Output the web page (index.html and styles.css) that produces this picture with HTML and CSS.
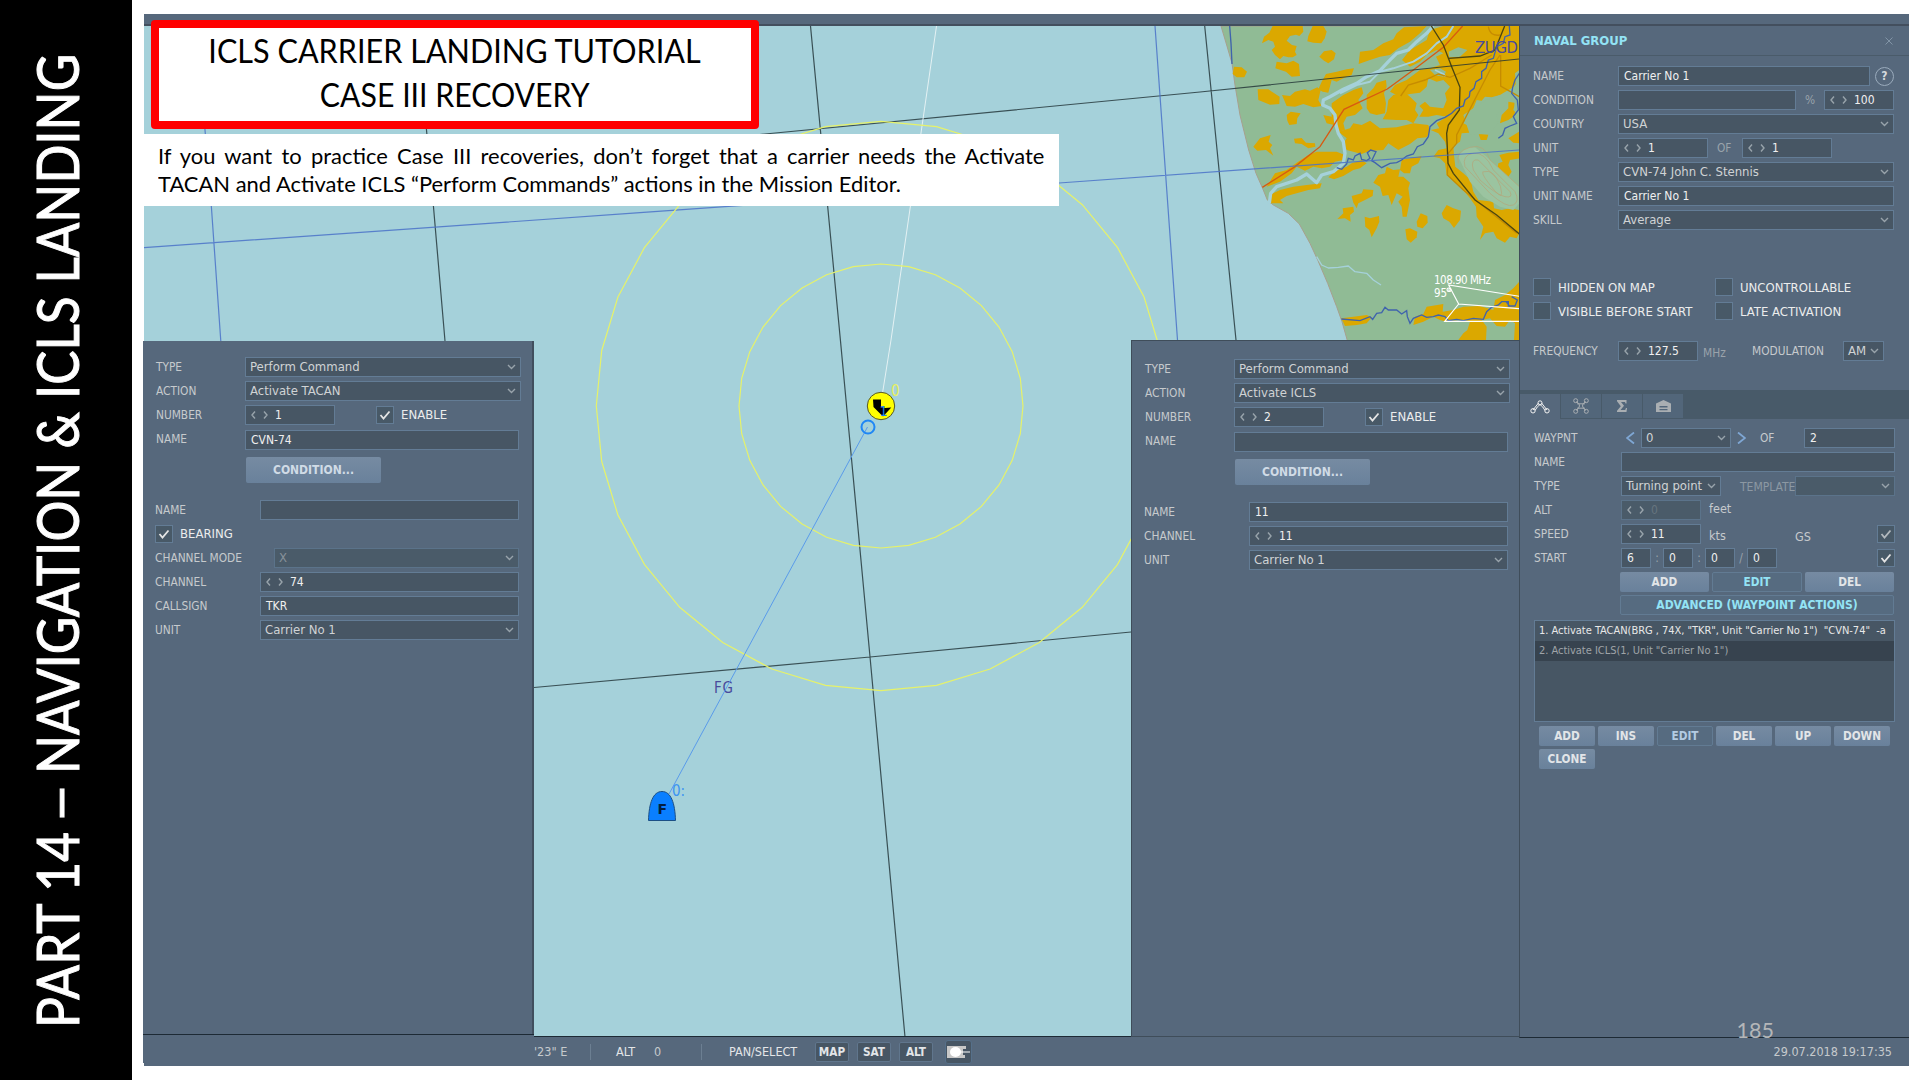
FILE: index.html
```html
<!DOCTYPE html>
<html lang="en">
<head>
<meta charset="utf-8">
<title>ICLS Carrier Landing Tutorial</title>
<link rel="stylesheet" href="styles.css">
</head>
<body>
<svg class="defs" aria-hidden="true">
  <symbol id="chev" viewBox="0 0 9 6"><path d="M1 1l3.500 3.500L8 1"/></symbol>
  <symbol id="spin" viewBox="0 0 17 8"><path d="M4 .5L1 4l3 3.500M13 .5L16 4l-3 3.500"/></symbol>
  <symbol id="tick" viewBox="0 0 12 10"><path d="M1.500 5l3 3.500L10.500 1.500"/></symbol>
  <polygon id="ring" points="1,0 .981,.195 .924,.383 .831,.556 .707,.707 .556,.831 .383,.924 .195,.981 0,1 -.195,.981 -.383,.924 -.556,.831 -.707,.707 -.831,.556 -.924,.383 -.981,.195 -1,0 -.981,-.195 -.924,-.383 -.831,-.556 -.707,-.707 -.556,-.831 -.383,-.924 -.195,-.981 0,-1 .195,-.981 .383,-.924 .556,-.831 .707,-.707 .831,-.556 .924,-.383 .981,-.195" vector-effect="non-scaling-stroke"/>
</svg>
<div class="slide">
  <aside class="chapter">
    <svg viewBox="0 0 132 1080" width="132" height="1080">
      <g transform="translate(79 1080) rotate(-90)">
        <text x="52" y="0" textLength="196" lengthAdjust="spacingAndGlyphs">PART 14</text>
        <text x="257" y="0" textLength="40" lengthAdjust="spacingAndGlyphs">–</text>
        <text x="306" y="0" textLength="720" lengthAdjust="spacingAndGlyphs">NAVIGATION &amp; ICLS LANDING</text>
      </g>
    </svg>
  </aside>
  <main class="editor">
    <div class="topbar"></div>
    <div class="workspace">
      <section class="map">
        <svg class="chart" viewBox="144 26 1375 1010" width="1375" height="1010">
          <g transform="translate(1180 0) scale(.33333)">
            <path class="land" d="M123 78L140 135 156 190 165 255 180 345 206 450 228 520 247 563 262 600 280 615 325 640 358 672 390 730 414 782 443 850 470 920 486 965 503 1025H1020V78Z"/>
            <g class="town">
              <path d="M278 78H368L370 95 358 108 348 104 330 108 320 122 336 135 350 138 345 155 350 165 338 172 325 172 310 168 300 178 285 165 275 150 285 140 280 125 265 120 246 130 252 110 268 98Z"/>
              <path d="M398 78H430L440 95 434 115 424 130 400 128 382 124 385 108Z"/>
              <path d="M290 185L320 190 340 182 357 192 360 228 335 230 318 215 286 205Z"/>
              <path d="M418 170L432 154 455 150 467 160 462 178 445 190 432 182Z"/>
              <path d="M162 200L185 202 201 215 193 232 170 232 158 222Z"/>
              <path d="M536 192L540 155 580 150 610 130 640 118 650 100 672 82 740 78 720 100 690 125 655 145 630 165 600 170 570 180Z"/>
              <path d="M438 222L470 215 500 208 522 205 515 225 490 235 470 245 455 240 445 278 428 275 415 268 425 245Z"/>
              <path d="M666 180L690 150 740 120 750 90 790 78H1018V240L1000 262 985 270 960 285 935 292 915 290 905 302 890 300 880 325 862 350 850 370 872 380 868 398 845 400 840 425 820 438 822 465 826 500 850 520 872 540 880 575 895 600 940 605 942 625 965 630 990 625 1018 630V700L1010 715 990 710 975 728 950 715 940 695 915 700 900 720 910 680 890 650 888 620 870 595 845 565 818 540 800 525 795 490 780 475 760 470 775 450 800 445 795 425 775 400 752 390 778 385 770 370 800 350 770 345 745 350 718 350 730 330 718 318 735 305 750 320 790 325 800 300 795 280 810 260 790 240 770 245 745 235 740 260 720 278 690 282 660 290 630 275 645 255 680 240 700 225 720 210 750 205 780 195 768 170 790 160 770 150 740 165 720 185 690 200Z"/>
              <path d="M233 268L265 268 299 290 298 312 270 314 235 300Z"/>
              <path d="M306 285L330 288 345 275 375 268 390 272 412 262 422 270 415 300 425 318 400 322 370 312 345 320 320 318Z"/>
              <path d="M320 345L332 335 362 340 352 355 350 372 328 375 322 362Z"/>
              <path d="M220 440L240 415 272 405 266 425 277 435 270 445 280 467 258 450 232 452Z"/>
              <path d="M342 416L365 414 378 428 405 430 406 440 385 445 365 432 345 430Z"/>
              <path d="M455 310L490 285 520 270 545 262 550 280 535 300 548 325 525 345 500 350 490 370 495 390 475 395 462 375 440 370 430 345 455 350Z"/>
              <path d="M560 285L580 265 590 248 618 240 620 260 612 280 618 310 615 340 590 345 570 340 560 325Z"/>
              <path d="M625 300L640 285 672 275 690 290 710 310 705 330 715 345 700 370 680 360 650 360 608 358 620 335Z"/>
              <path d="M475 395L510 385 520 370 545 375 570 362 600 385 650 382 700 370 745 375 750 395 740 412 712 415 690 432 655 450 625 430 610 450 570 452 545 462 500 450 490 430 500 415Z"/>
              <path d="M350 488L385 465 410 455 470 455 495 465 490 480 465 485 450 500 425 505 400 500 375 512 350 500 335 520 300 545 260 560 285 520 320 510Z"/>
              <path d="M470 510L500 500 515 490 545 480 560 490 540 505 520 510 490 528 462 538 445 532Z"/>
              <path d="M270 610L275 582 300 570 340 560 380 555 425 550 420 565 385 570 350 580 320 588 300 600 310 610Z"/>
              <path d="M580 548L595 525 615 520 620 500 640 510 660 508 655 530 670 530 690 548 685 565 690 600 680 650 668 650 665 620 655 605 668 590 650 580 635 615 625 585 608 588 600 560Z"/>
              <path d="M660 510L665 480 690 475 725 468 715 490 695 500 690 520 672 520Z"/>
              <path d="M520 608L515 588 545 580 550 568 580 570 578 588 555 600 535 610 530 625Z"/>
              <path d="M472 657L490 640 488 625 520 620 522 635 510 645 512 665 495 655Z"/>
              <path d="M554 650L570 655 597 648 598 665 590 685 575 712 568 690 556 680Z"/>
              <path d="M676 688L690 685 712 695 710 712 692 728 680 718Z"/>
              <path d="M710 665L722 640 742 648 743 668 728 685 712 680Z"/>
              <path d="M785 640L800 615 820 625 843 632 840 660 822 684 808 665 790 655Z"/>
              <path d="M960 370L965 345 985 325 985 305 1003 308 1006 335 1000 350 985 360Z"/>
              <path d="M896 402L925 404 920 420 902 420Z"/>
              <path d="M985 415L1018 395V430L1000 428Z"/>
              <path d="M958 465L985 458 1018 455V475L990 480 985 495 995 515 985 530 968 520 952 508 955 490 968 485Z"/>
              <path d="M484 955L520 950 560 945 575 952 560 970 530 975 495 978Z"/>
              <path d="M700 975L705 950 730 942 740 920 790 912 788 935 820 930 850 920 900 918 940 930 945 900 975 885 1000 865 1018 845V1020H1002L1005 970 990 960 975 980 950 978 930 955 905 960 920 980 918 1020H835L850 1000 862 990 870 965 835 960 800 965 780 960 760 950 730 965Z"/>
            </g>
            <g class="green"><path d="M806 155L835 142 862 150 840 170 808 172ZM750 210L780 205 798 215 790 230 765 225ZM850 345L880 325 920 300 960 285 980 310 950 345 955 370 930 400 870 405ZM1005 220L1018 210V350L1000 330 1010 290Z"/></g>
            <path class="hill" d="M835 470Q850 440 885 442L920 470 1018 560V610L1000 630 960 620 910 590 870 545Z"/>
            <path class="contour" d="M835 490Q825 455 870 442T930 480L1018 560M855 500Q845 465 880 460T940 510L1005 575Q1020 605 1000 615T930 580ZM880 510Q870 475 895 480L990 575Q1000 595 975 590T900 540ZM915 515Q935 510 950 535T965 580 930 555 915 515"/>
            <g class="water">
              <path d="M760 78L740 100 710 125 685 150 650 160 625 185 600 212 560 230 530 250 490 268 450 290 430 300 428 315 450 325 465 345 468 375 475 400 490 425 495 460 490 490 460 515 425 525 410 548 380 522 350 540 290 560 272 580 268 610" stroke-width="10"/>
              <path d="M820 78L800 110 770 130 740 160 700 185 640 205 600 215 570 245 530 255 480 280" stroke-width="6"/>
              <path d="M765 210L790 222 797 230" stroke-width="5"/>
              <path d="M410 770L425 795 445 804 475 802 505 798 525 815 560 820 580 840 603 855" stroke-width="4"/>
            </g>
            <g class="roads">
              <path class="brown" d="M662 288L685 255 735 240 775 222 810 232 870 205 935 165M925 80Q930 110 960 105M962 165V258L1018 290M960 165L930 210 830 405V430L805 460 802 525 850 570 1010 700"/>
              <path class="red" d="M848 78L790 142 700 210 622 267 492 328 420 440 342 502 247 562"/>
              <path class="black" d="M754 78L790 135 815 200 840 262 838 330 805 375 800 400 804 490 820 520 885 600 950 645 1018 702M806 175L900 168 945 150 974 78"/>
            </g>
            <path class="river" d="M988 78L990 105 975 110 970 130 950 140 940 175 925 180 918 205 905 215 905 235 888 245 882 265 870 275 868 290 855 300 850 318 830 325 815 340 795 352 770 362 750 380 745 410 730 432 712 440 700 462 680 468 665 480 650 488 630 490 605 503 585 488 575 482 588 455 572 450 562 458 570 475 560 482 545 478 540 460 525 468 520 480 505 475 500 492 485 508 470 503M1018 220L1005 240 998 262 995 280 1012 300 1015 330 1000 350 1010 370 990 378 975 385 968 405 955 415M149 78L153 130 156 192M484 957L540 962 570 950 578 958 590 940 605 938 615 922 625 930 650 930 665 942 680 932 682 950 690 970 700 955 725 945 740 952 760 950 775 945 795 950 805 962 830 958 850 962 880 955 910 958 920 935 935 922 955 915 965 905 985 905 985 918 1005 918 1012 900 995 890M978 905L990 920"/>
            <path class="runway" d="M1018 889L806 855 836 912 1018 926M836 912L794 964H1018"/>
            <circle class="runway" cx="806" cy="869" r="5"/>
          </g>
          <g class="grid-black">
            <path d="M810.500 26L840.400 340 870 656.700 905 1037M418 26L426.500 130 433.500 207 445 341M1204.700 26L1236 340M534 160L765 134 1200 92 1519 59M534 687.500L870 657 1131 632"/>
          </g>
          <g class="grid-blue">
            <path d="M197 26L205 130 211.400 207 220.800 341M1155 26L1177.500 340M144 247.600L640 212.700 1059 183 1519 150"/>
          </g>
          <path class="course" d="M936.500 26L891 340 882.700 392"/>
          <use href="#ring" class="range" transform="translate(881 406) scale(142)"/>
          <use href="#ring" class="range" transform="translate(881 406) scale(284.700)"/>
          <text class="place" x="1475" y="53" textLength="43">ZUGD</text>
          <text class="place small" x="714" y="693" textLength="19">FG</text>
          <text class="beacon" x="1434" y="284" textLength="57">108.90 MHz</text>
          <text class="beacon" x="1434" y="297">95°</text>
          <path class="route" d="M867.500 427L669 794"/>
          <circle class="waypoint" cx="868" cy="427" r="6.500"/>
          <circle class="ship" cx="881" cy="406" r="13.700"/>
          <path d="M873 399.500H881V406.500L885 408 891.300 407.500 883 416.500 873.500 407Z"/>
          <text class="wp one" x="879.500" y="416">1</text>
          <text class="wp yellow" x="891" y="396">0</text>
          <path class="flight" d="M648.500 820.500C649 803 653 791.500 662 791.500S675 803 675.500 820.500Z"/>
          <text class="flight-tag" x="657.500" y="813.500">F</text>
          <text class="wp" x="672" y="796">0:</text>
        </svg>
        <header class="title"><span>ICLS CARRIER LANDING TUTORIAL</span><span class="second">CASE III RECOVERY</span></header>
        <p class="note"><span>If you want to practice Case III recoveries, don’t forget that a carrier needs the Activate</span><span class="last">TACAN and Activate ICLS “Perform Commands” actions in the Mission Editor.</span></p>

        <section class="action tacan">
          <div class="row"><label>TYPE</label><div class="field select">Perform Command<svg class="chev"><use href="#chev"/></svg></div></div>
          <div class="row"><label>ACTION</label><div class="field select">Activate TACAN<svg class="chev"><use href="#chev"/></svg></div></div>
          <div class="row"><label>NUMBER</label><div class="field w90"><svg class="spin"><use href="#spin"/></svg>1</div><i class="box enable"><svg><use href="#tick"/></svg></i><b class="caption">ENABLE</b></div>
          <div class="row name"><label>NAME</label><div class="field short">CVN-74</div></div>
          <div class="row cond"><button>CONDITION...</button></div>
          <div class="params">
            <div class="row"><label>NAME</label><div class="field"></div></div>
            <div class="row"><i class="box"><svg><use href="#tick"/></svg></i><b class="caption">BEARING</b></div>
            <div class="row"><label class="wide">CHANNEL MODE</label><div class="field select off">X<svg class="chev"><use href="#chev"/></svg></div></div>
            <div class="row"><label>CHANNEL</label><div class="field"><svg class="spin"><use href="#spin"/></svg>74</div></div>
            <div class="row"><label>CALLSIGN</label><div class="field">TKR</div></div>
            <div class="row"><label>UNIT</label><div class="field select">Carrier No 1<svg class="chev"><use href="#chev"/></svg></div></div>
          </div>
          <div class="base"></div>
        </section>

        <section class="action icls">
          <div class="row"><label>TYPE</label><div class="field select">Perform Command<svg class="chev"><use href="#chev"/></svg></div></div>
          <div class="row"><label>ACTION</label><div class="field select">Activate ICLS<svg class="chev"><use href="#chev"/></svg></div></div>
          <div class="row"><label>NUMBER</label><div class="field w90"><svg class="spin"><use href="#spin"/></svg>2</div><i class="box enable"><svg><use href="#tick"/></svg></i><b class="caption">ENABLE</b></div>
          <div class="row name"><label>NAME</label><div class="field short"></div></div>
          <div class="row cond"><button>CONDITION...</button></div>
          <div class="params">
            <div class="row"><label>NAME</label><div class="field">11</div></div>
            <div class="row"><label>CHANNEL</label><div class="field"><svg class="spin"><use href="#spin"/></svg>11</div></div>
            <div class="row"><label>UNIT</label><div class="field select">Carrier No 1<svg class="chev"><use href="#chev"/></svg></div></div>
          </div>
        </section>
      </section>

      <section class="group">
        <header><h2>NAVAL GROUP</h2><svg class="close" viewBox="0 0 8 8"><path d="M.5 .5l7 7M7.500 .5l-7 7"/></svg></header>
        <div class="form">
          <div class="row"><label>NAME</label><div class="field">Carrier No 1</div><i class="help">?</i></div>
          <div class="row"><label>CONDITION</label><div class="field"></div><em class="pct">%</em><div class="field w70"><svg class="spin"><use href="#spin"/></svg>100</div></div>
          <div class="row"><label>COUNTRY</label><div class="field select">USA<svg class="chev"><use href="#chev"/></svg></div></div>
          <div class="row"><label>UNIT</label><div class="field w90"><svg class="spin"><use href="#spin"/></svg>1</div><em class="of">OF</em><div class="field w90"><svg class="spin"><use href="#spin"/></svg>1</div></div>
          <div class="row"><label>TYPE</label><div class="field select">CVN-74 John C. Stennis<svg class="chev"><use href="#chev"/></svg></div></div>
          <div class="row"><label>UNIT NAME</label><div class="field">Carrier No 1</div></div>
          <div class="row"><label>SKILL</label><div class="field select">Average<svg class="chev"><use href="#chev"/></svg></div></div>
        </div>
        <div class="flags">
          <div><i class="box"></i><b class="caption">HIDDEN ON MAP</b></div><div><i class="box"></i><b class="caption">UNCONTROLLABLE</b></div>
          <div><i class="box"></i><b class="caption">VISIBLE BEFORE START</b></div><div><i class="box"></i><b class="caption">LATE ACTIVATION</b></div>
        </div>
        <div class="row radio"><label>FREQUENCY</label><div class="field w80"><svg class="spin"><use href="#spin"/></svg>127.5</div><em class="mhz">MHz</em><label class="mod">MODULATION</label><div class="field select am">AM<svg class="chev"><use href="#chev"/></svg></div></div>
        <nav class="tabs">
          <span class="active"><svg width="20" height="14" viewBox="0 0 20 14"><path d="M3 10L8.500 3M11.500 3L17 10M5 10.500q2-4 5-6 3 2 5 6"/><circle cx="10" cy="2.800" r="2"/><circle cx="3" cy="10.800" r="2.200"/><circle cx="17" cy="10.800" r="2.200"/></svg></span>
          <span><svg width="16" height="16" viewBox="0 0 16 16"><path d="M3.500 3.500Q7 6 6.500 8T3.500 12.500M12.500 3.500Q9 6 9.500 8t3 4.500M4 5.800h8M4 10.200h8"/><circle cx="2.700" cy="2.700" r="2"/><circle cx="13.300" cy="2.700" r="2"/><circle cx="2.700" cy="13.300" r="2"/><circle cx="13.300" cy="13.300" r="2"/></svg></span>
          <span class="sigma"><svg width="10" height="12" viewBox="0 0 10 12"><path d="M0 0H9.500V3.500H8.500L8 2H4L7 5.800 3.500 10H8.200L9 8H10L9.500 12H0V10.800L3.800 6.200 0 1.300Z"/></svg></span>
          <span class="sigma"><svg width="15" height="12" viewBox="0 0 15 12"><path fill-rule="evenodd" d="M0 3.500L7.500 0 15 3.500V12H0ZM3.500 6V7.500h8V6ZM3.500 9v1.200h8V9Z"/></svg></span>
        </nav>
        <div class="waypoint-form">
          <div class="row"><label>WAYPNT</label><svg class="step" viewBox="0 0 9 12"><path d="M8 .5L1 6l7 5.500"/></svg><div class="field select w90">0<svg class="chev"><use href="#chev"/></svg></div><svg class="step next" viewBox="0 0 9 12"><path d="M1 .5L8 6l-7 5.500"/></svg><label class="of2">OF</label><div class="field">2</div></div>
          <div class="row"><label>NAME</label><div class="field"></div></div>
          <div class="row"><label>TYPE</label><div class="field select turning">Turning point<svg class="chev"><use href="#chev"/></svg></div><em class="template">TEMPLATE</em><div class="field select off w100"><svg class="chev"><use href="#chev"/></svg></div></div>
          <div class="row"><label>ALT</label><div class="field off w80"><svg class="spin"><use href="#spin"/></svg><s>0</s></div><span class="unit up">feet</span></div>
          <div class="row"><label>SPEED</label><div class="field w80"><svg class="spin"><use href="#spin"/></svg>11</div><span class="unit">kts</span><span class="gs">GS</span><i class="box dim push"><svg><use href="#tick"/></svg></i></div>
          <div class="row time"><label>START</label><div class="field w30">6</div><em>:</em><div class="field w30">0</div><em>:</em><div class="field w30">0</div><em>/</em><div class="field w30">0</div><i class="box push"><svg><use href="#tick"/></svg></i></div>
          <div class="edit"><button>ADD</button><button class="flat">EDIT</button><button>DEL</button></div>
          <button class="flat advanced">ADVANCED (WAYPOINT ACTIONS)</button>
        </div>
        <ul class="actions"><li>1. Activate TACAN(BRG , 74X, "TKR", Unit "Carrier No 1")&nbsp; "CVN-74"&nbsp; -a</li><li class="alt">2. Activate ICLS(1, Unit "Carrier No 1")</li></ul>
        <div class="commands"><button>ADD</button><button>INS</button><button class="flat pale">EDIT</button><button>DEL</button><button>UP</button><button>DOWN</button><button>CLONE</button></div>
      </section>
    </div>
    <footer class="status">
      <span class="coord">'23" E</span><i class="sep"></i><span class="alt-label">ALT</span><span class="alt-val">0</span><i class="sep"></i><span class="mode">PAN/SELECT</span>
      <button>MAP</button><button>SAT</button><button>ALT</button>
      <span class="view"><svg width="23" height="12" viewBox="0 0 23 12"><path class="shade" d="M0 0H5V12H0ZM14 0H19V3H16V9H18V12H13ZM4 0H16V12H4Z"/><ellipse cx="8.500" cy="6" rx="5.500" ry="5"/><path d="M13 5.500H23V6.500H13Z"/></svg></span>
      <time>29.07.2018 19:17:35</time>
    </footer>
    <span class="page">185</span>
  </main>
</div>
</body>
</html>
```
FILE: styles.css
```css
* { box-sizing: border-box; }
body { margin: 0; background: #fff; font-family: "DejaVu Sans Condensed", "DejaVu Sans", sans-serif; font-stretch: condensed; font-size: 12px; color: #c6cacd; overflow: hidden; }
h2, p, ul { margin: 0; padding: 0; font-weight: 400; }
i, em { font-style: normal; }
svg { flex: none; fill: none; stroke: currentColor; }
.defs { position: absolute; width: 0; height: 0; }
.slide { display: flex; width: 1920px; height: 1080px; }

.chapter { width: 132px; background: #000; }
.chapter svg { display: block; }
.chapter text { font: 400 58px Lato, sans-serif; fill: #fff; stroke: #fff; stroke-width: 1px; }

.editor { position: relative; width: 1765px; height: 1052px; margin: 14px 0 0 12px; background: #56687c; display: flex; flex-direction: column; }
.topbar { height: 12px; border-bottom: 2px solid #434f5e; }
.workspace { display: flex; height: 1011px; }
.map { position: relative; width: 1375px; border-bottom: 1px solid #1d2a35; }
.chart { display: block; background: #a5d1da; }

.land { fill: #90bb95; stroke: #a7a08e; stroke-width: 3; }
.town path { fill: #dba800; stroke: none; }
.green path { fill: #90bb95; stroke: none; }
.hill { fill: #9bc4a0; stroke: none; }
.contour { stroke: #b5a377; stroke-width: 2; }
.water path { stroke: #a5d1da; stroke-linejoin: round; }
.roads path { stroke-width: 4; }
.roads .brown { stroke: #c68c00; }
.roads .red { stroke: #d85a10; }
.roads .black { stroke: #4a4510; }
.river { stroke: #3f63ad; stroke-width: 4; }
.runway { stroke: #fff; stroke-width: 3.500; }
.grid-black { stroke: #1e2f33; stroke-width: 1.200; opacity: .8; }
.grid-blue { stroke: #4a72c8; stroke-width: 1.200; opacity: .85; }
.course { stroke: #e4f1f3; }
.range { stroke: #e6f26a; stroke-width: 1.200; }
.route { stroke: #5a9bea; }
.waypoint { stroke: #1f87f5; stroke-width: 2; }
.ship { fill: #ff0; stroke: #55552a; }
.ship + path { fill: #000; stroke: none; }
.flight { fill: #0a7fff; stroke: #1c4f85; }
.chart text { stroke: none; }
.place { font-size: 16.500px; fill: #494a9c; }
.place.small { font-size: 15px; }
.beacon { font-size: 11.500px; fill: #fff; }
.wp { font-size: 15px; fill: #3c94f2; }
.wp.one { fill: #1f80f0; font-size: 14px; }
.wp.yellow { fill: #e8ef60; }
.flight-tag { font: 700 14px "DejaVu Sans", sans-serif; fill: #03203f; }

.title { position: absolute; left: 7px; top: -6px; width: 608px; height: 109px; padding-top: 1px; border: 8px solid #f00; border-radius: 4px; background: #fff; color: #000; font: 400 32px/44px Lato, sans-serif; display: flex; flex-direction: column; align-items: center; white-space: nowrap; }
.title span { transform: scaleX(.956); }
.title .second { transform: scaleX(.945); }
.note { position: absolute; left: 0; top: 108px; width: 915px; height: 72px; padding: 8px 0 0 14px; background: #fff; color: #000; font: 400 21.500px/28px Lato, sans-serif; }
.note span { display: block; width: 869px; white-space: nowrap; text-align-last: justify; transform: scaleX(1.02); transform-origin: 0 0; }
.note .last { text-align-last: left; }

.row { display: flex; align-items: center; height: 20px; margin-bottom: 4px; }
label, em, .unit, .gs { flex: none; font-size: 11.800px; white-space: nowrap; }
.row > label:first-child { width: 85px; }
.field { flex: 1; display: flex; align-items: center; height: 20px; padding-left: 5px; border: 1px solid #637c95; background: #475664; color: #f0f0f0; white-space: nowrap; overflow: hidden; }
.field.select { font-size: 13px; color: #d0d3d5; padding: 0 0 2px 4px; }
.field.off { background: #4a5b69; color: #87919a; border-color: #5b738a; }
.field s { color: #66747f; text-decoration: none; }
.chev { width: 9px; height: 6px; margin: 1px 4px 0 auto; stroke: #98a3ab; stroke-width: 1.400; }
.spin { width: 17px; height: 8px; margin-right: 7px; stroke: #98a3ab; stroke-width: 1.400; }
.w30, .w70, .w80, .w90, .w100 { flex: none; }
.w30 { width: 30px; } .w70 { width: 70px; } .w80 { width: 80px; } .w90 { width: 90px; } .w100 { width: 100px; }
.box { flex: none; display: flex; align-items: center; justify-content: center; width: 18px; height: 18px; border: 1px solid #637c95; background: #485967; }
.box svg { width: 12px; height: 10px; stroke: #e5e5e5; stroke-width: 1.800; }
.box.dim svg { stroke: #b3b9be; }
.caption { margin-left: 7px; font-weight: 400; font-size: 13px; color: #eceded; white-space: nowrap; }
.row .caption { padding-bottom: 2px; }
button { font: 700 11.700px "DejaVu Sans Condensed", "DejaVu Sans", sans-serif; font-stretch: condensed; height: 20px; padding: 0; border: 0; border-radius: 2px; background: linear-gradient(#768ba2, #69819b); color: #e2e5e8; }
button.flat { background: #566b80; border: 1px solid #627b93; color: #93e3f5; }
button.pale { color: #b3cbe3; }

.action { position: absolute; background: #56687c; }
.tacan { left: -1px; top: 315px; width: 391px; height: 722px; padding: 16px 0 0 13px; border-right: 2px solid #414f5e; }
.icls { right: 0; top: 314px; width: 388px; height: 697px; padding: 18px 0 0 13px; border: solid #3f4d5a; border-width: 1px 0 1px 1px; }
.action > .row { width: 365px; }
.action > .row > label:first-child { width: 89px; }
.action > .name { margin-top: 5px; }
.action > .name label { padding-bottom: 2px; }
.enable { margin-left: 41px; }
.short { margin-right: 2px; }
.cond { height: 26px; margin: 7px 0 17px; padding-left: 90px; }
.cond button { width: 135px; height: 26px; font-size: 12px; color: #d0dbe6; }
.params { margin-left: -1px; width: 364px; }
.params .row > label:first-child { width: 105px; }
.params .row > label.wide { width: 119px; }
.base { position: absolute; left: 0; right: -2px; bottom: 0; height: 29px; background: #56687c; border-top: 1px solid #1d2a35; }

.group { width: 390px; border-left: 1px solid #3f4d5a; border-bottom: 1px solid #1d2a35; height: 1012px; }
.group header { display: flex; align-items: center; justify-content: space-between; height: 30px; padding: 0 16px 0 14px; border-bottom: 1px solid #4a5b6a; }
.group h2 { font-size: 13px; font-weight: 700; color: #93e3f5; }
.close { width: 8px; height: 8px; stroke: #8194a6; }
.form { padding: 10px 15px 0 13px; height: 222px; }
.help { width: 19px; height: 19px; margin-left: 5px; border: 1px solid #9aabbc; border-radius: 50%; font-weight: 700; line-height: 17px; text-align: center; color: #d6dadd; }
em { color: #9aa3ab; }
.pct { width: 28px; padding-left: 9px; }
.of { width: 34px; padding-left: 9px; }
.flags { display: grid; grid-template-columns: 182px 1fr; row-gap: 6px; padding-left: 13px; }
.flags > div { display: flex; align-items: center; height: 18px; }
.radio { margin: 21px 0 0; padding-left: 13px; height: 20px; }
.mhz { width: 54px; padding: 4px 0 0 5px; }
.mod { width: 91px; }
.am { flex: none; width: 41px; }
.tabs { display: flex; gap: 1px; height: 29px; margin-top: 29px; padding: 4px 0 1px; background: #485a69; }
.tabs span { display: flex; align-items: center; justify-content: center; width: 40px; background: #52667a; color: #a9aeb2; }
.tabs .active { background: #56687c; color: #f2f2f2; margin-bottom: -1px; }
.sigma path { fill: currentColor; stroke: none; }
.waypoint-form { padding: 9px 14px 0; }
.waypoint-form .row > label:first-child { width: 87px; }
.step { width: 9px; height: 12px; margin: 0 6px 0 5px; stroke: #7fa7d4; stroke-width: 1.800; }
.step.next { margin: 0 14px 0 6px; }
.of2 { width: 44px; }
.turning { flex: none; width: 100px; }
.template { width: 74px; padding: 2px 0 0 19px; overflow: hidden; color: #8c98a3; font-size: 12px; }
.unit { width: 94px; padding: 2px 0 0 8px; font-size: 12.500px; }
.unit.up { padding: 0 0 4px 8px; }
.gs { padding-top: 5px; font-size: 12.500px; }
.push { margin-left: auto; }
.time em { width: 12px; text-align: center; }
.edit { display: flex; gap: 3px; margin: 0 1px 3px 86px; }
.edit button { flex: 1; }
.advanced { display: block; width: 274px; margin-left: 86px; padding-bottom: 1px; font-size: 12px; }
.actions { list-style: none; margin: 5px 14px 4px; height: 102px; border: 1px solid #637c95; background: #475664; color: #e8e8e8; font-size: 11px; letter-spacing: -.03px; }
.actions li { height: 20px; line-height: 19px; padding-left: 4px; white-space: nowrap; }
.actions .alt { background: #37434f; color: #9fa4a8; }
.commands { display: flex; flex-wrap: wrap; gap: 3px; padding-left: 19px; }
.commands button { width: 56px; }

.status { display: flex; align-items: center; height: 29px; padding: 0 17px 0 390px; color: #c6cacd; font-size: 12.500px; }
.coord { width: 56px; }
.sep { width: 1px; height: 16px; background: #6c7f92; }
.alt-label { width: 38px; margin-left: 25px; color: #e4e6e8; }
.alt-val { width: 47px; }
.mode { width: 86px; margin-left: 27px; color: #e4e6e8; }
.status button { width: 34px; height: 20px; margin-right: 8px; border: 1px solid #60768d; background: #475664; }
.view { display: flex; align-items: center; justify-content: center; width: 27px; height: 24px; margin-left: 4px; border-radius: 3px; background: #475664; border: 1px solid #56708a; }
.view svg { fill: #fff; stroke: none; }
.view .shade { fill: #c8c8c8; }
.status time { margin-left: auto; }
.page { position: absolute; right: 135px; bottom: 22px; font: 400 21.500px/28px Lato, sans-serif; color: #b4b6b8; }
```
